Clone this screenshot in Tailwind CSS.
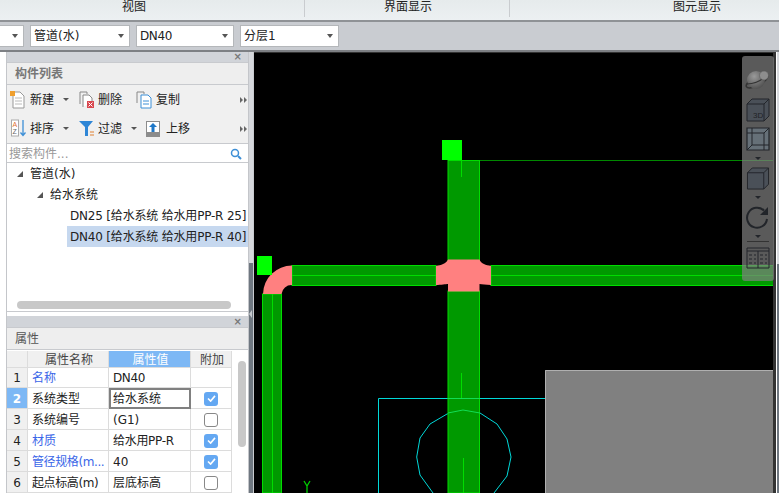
<!DOCTYPE html>
<html><head><meta charset="utf-8">
<script src="https://cdn.jsdelivr.net/npm/@tailwindcss/browser@4"></script>
</head>
<body class="w-[779px] h-[493px] overflow-hidden bg-white font-['DejaVu_Sans','Noto_Sans_CJK_SC',sans-serif] text-[12px] text-[#222]">
<div class="flex flex-col h-[493px]">
  <!-- ribbon group captions -->
  <div class="h-[22px] shrink-0 flex bg-gradient-to-b from-[#e6ebec] to-[#ecf0f2] border-b-2 border-[#8f9296] leading-[14px]">
    <div class="w-[305px] text-center border-r border-[#c9cccf] mb-[3px]"><span class="relative left-[-18px]">视图</span></div>
    <div class="w-[205px] text-center border-r border-[#c9cccf] mb-[3px] pl-[2px]">界面显示</div>
    <div class="flex-1 text-center pl-[105px]">图元显示</div>
  </div>
  <!-- combo toolbar -->
  <div class="h-[28px] shrink-0 bg-[#c9ccd1] flex items-center gap-[6px]">
    <div class="w-[25px] -ml-px h-[22px] bg-white border border-[#b4b7ba] flex items-center justify-end pr-[5px]"><i class="w-0 h-0 border-x-[3px] border-x-transparent border-t-[4px] border-t-[#555]"></i></div>
    <div class="w-[100px] h-[22px] bg-white border border-[#b4b7ba] flex items-center justify-between pl-[3px] pr-[5px]">管道(水)<i class="w-0 h-0 border-x-[3px] border-x-transparent border-t-[4px] border-t-[#555]"></i></div>
    <div class="w-[98px] h-[22px] bg-white border border-[#b4b7ba] flex items-center justify-between pl-[3px] pr-[5px]"><span class="tracking-[-0.4px]">DN40</span><i class="w-0 h-0 border-x-[3px] border-x-transparent border-t-[4px] border-t-[#555]"></i></div>
    <div class="w-[99px] h-[22px] bg-white border border-[#b4b7ba] flex items-center justify-between pl-[3px] pr-[5px]">分层1<i class="w-0 h-0 border-x-[3px] border-x-transparent border-t-[4px] border-t-[#555]"></i></div>
  </div>
  <div class="flex-1 min-h-0 flex border-t-2 border-[#7d8084]">
    <!-- left strip -->
    <div class="w-[7px] shrink-0 bg-white border-r border-[#c4c6ca]"></div>
    <!-- left panels -->
    <div class="w-[242px] shrink-0 flex flex-col bg-white border-r border-[#c4c6ca]">
      <div class="h-[10px] bg-[#d1d4d9] flex items-center justify-end pr-[6px] text-[#777] text-[10px] leading-none font-bold">×</div>
      <div class="h-[23px] bg-[#eeeeee] border-y border-[#c8cace] pl-[8px] pt-px flex items-center font-bold text-[#777]">构件列表</div>
      <div class="h-[29px] bg-[#f0f0f0] flex items-center pl-[3px] relative">
        <svg width="15" height="18" viewBox="0 0 15 18" class="mr-[5px]"><path d="M3 1h7l4 4v12H3z" fill="#fff" stroke="#999"/><path d="M5 7h7M5 10h7M5 13h7" stroke="#bbb"/><rect x="0" y="0" width="5" height="5" fill="#f0a030"/></svg>
        <span>新建</span><i class="ml-[9px] w-0 h-0 border-x-[3px] border-x-transparent border-t-[3px] border-t-[#555]"></i>
        <svg width="16" height="18" viewBox="0 0 16 18" class="ml-[10px] mr-[3px]"><path d="M1 13V1h7v2" fill="none" stroke="#888"/><path d="M4 16V4h6l3 3v4" fill="#fff" stroke="#888"/><rect x="8" y="10" width="7" height="7" fill="#d9484f"/><path d="M9.5 11.5l4 4M13.500 11.500l-4 4" stroke="#fff"/></svg>
        <span>删除</span>
        <svg width="17" height="18" viewBox="0 0 17 18" class="ml-[14px] mr-[3px]"><path d="M1 12V1h7v2" fill="none" stroke="#888"/><path d="M5 17V4h7l3 3v10z" fill="#fff" stroke="#3d8fd6"/><path d="M7 10h6M7 13h6" stroke="#3d8fd6"/></svg>
        <span>复制</span>
        <span class="absolute right-[1px] top-[12px] flex gap-px"><i class="w-0 h-0 border-y-[3px] border-y-transparent border-l-[3px] border-l-[#666]"></i><i class="w-0 h-0 border-y-[3px] border-y-transparent border-l-[3px] border-l-[#666]"></i></span>
      </div>
      <div class="h-[29px] bg-[#f0f0f0] flex items-center pl-[4px] relative">
        <svg width="15" height="19" viewBox="0 0 15 19" class="mr-[4px]"><rect x=".5" y="1" width="7" height="16" fill="#fff" stroke="#aaa"/><text x="1.500" y="8" font-size="7" fill="#e07030" font-family="Liberation Sans">A</text><text x="1.500" y="15" font-size="7" fill="#666" font-family="Liberation Sans">Z</text><path d="M12 1v15M9.500 13.500l2.500 3 2.500-3" fill="none" stroke="#3d8fd6" stroke-width="1.300"/></svg>
        <span>排序</span><i class="ml-[9px] w-0 h-0 border-x-[3px] border-x-transparent border-t-[3px] border-t-[#555]"></i>
        <svg width="16" height="17" viewBox="0 0 16 17" class="ml-[10px] mr-[3px]"><path d="M0 1h14L9 7v9H6V7z" fill="#2e86d6"/><path d="M11 12h4M11 15h4" stroke="#e08030"/></svg>
        <span>过滤</span><i class="ml-[9px] w-0 h-0 border-x-[3px] border-x-transparent border-t-[3px] border-t-[#555]"></i>
        <svg width="15" height="16" viewBox="0 0 15 16" class="ml-[9px] mr-[5px]"><rect x="0" y="0" width="14" height="16" fill="#8c8c8c"/><rect x="1" y="1" width="12" height="10" fill="#fff"/><path d="M7 2l4 4H8.500v5h-3V6H3z" fill="#1f78c8"/></svg>
        <span>上移</span>
        <span class="absolute right-[1px] top-[12px] flex gap-px"><i class="w-0 h-0 border-y-[3px] border-y-transparent border-l-[3px] border-l-[#666]"></i><i class="w-0 h-0 border-y-[3px] border-y-transparent border-l-[3px] border-l-[#666]"></i></span>
      </div>
      <div class="h-[20px] bg-white border-y border-[#c8cace] flex items-center justify-between pl-[2px] pr-[6px] pt-px text-[#999]">搜索构件...
        <svg width="12" height="12" viewBox="0 0 12 12"><circle cx="5" cy="5" r="3.500" fill="none" stroke="#3d8fd6" stroke-width="1.500"/><path d="M8 8l3 3" stroke="#3d8fd6" stroke-width="2"/></svg>
      </div>
      <div class="h-[148px] bg-white relative flex flex-col">
        <div class="h-[21px] flex items-center pl-[10px] gap-[7px]"><i class="w-0 h-0 border-b-[6px] border-b-[#555] border-l-[6px] border-l-transparent"></i>管道(水)</div>
        <div class="h-[21px] flex items-center pl-[30px] pt-px gap-[7px]"><i class="w-0 h-0 border-b-[6px] border-b-[#555] border-l-[6px] border-l-transparent"></i>给水系统</div>
        <div class="h-[21px] flex items-center pl-[63px] whitespace-nowrap tracking-[-0.19px]">DN25 [给水系统 给水用PP-R 25]</div>
        <div class="h-[21px] ml-[60px] pl-[3px] bg-[#c6d8ef] flex items-center whitespace-nowrap tracking-[-0.19px]">DN40 [给水系统 给水用PP-R 40]</div>
        <div class="absolute left-[10px] top-[138px] w-[214px] h-[8px] rounded-full bg-[#c8c8c8]"></div>
      </div>
      <div class="h-[5px] bg-white border-t border-[#c8cace]"></div>
      <div class="h-[11px] bg-[#d1d4d9] flex items-center justify-end pr-[6px] text-[#777] text-[10px] leading-none font-bold">×</div>
      <div class="h-[23px] bg-[#eeeeee] border-y border-[#c8cace] pl-[8px] pt-px flex items-center text-[#555]">属性</div>
      <div class="flex-1 min-h-0 overflow-hidden flex bg-white pt-px">
        <div class="w-[225px] shrink-0 grid grid-cols-[21px_81px_82px_41px] grid-rows-[17px_20px] auto-rows-[21px] [&>div]:border-r [&>div]:border-b [&>div]:border-[#dcdcdc] [&>div]:flex [&>div]:items-center [&>div]:whitespace-nowrap [&>div]:pt-px">
          <div class="bg-[#f0f0f0]"></div>
          <div class="bg-[#f0f0f0] justify-center pl-[2px] text-[#444]">属性名称</div>
          <div class="bg-[#7db8f5] justify-center pl-[2px] text-white">属性值</div>
          <div class="bg-[#f0f0f0] justify-center pl-[2px] text-[#444]">附加</div>

          <div class="bg-[#f0f0f0] justify-center">1</div><div class="pl-[4px] text-[#3a66e8]">名称</div><div class="pl-[4px] tracking-[-0.4px]">DN40</div><div></div>
          <div class="bg-[#7db8f5] text-white font-bold justify-center">2</div><div class="pl-[4px]">系统类型</div><div class="pl-[2px] border-2! border-[#808080]!">给水系统</div><div class="justify-center"><span class="w-[14px] h-[14px] rounded-[3px] bg-[#64a8f2] flex items-center justify-center"><svg width="9" height="7" viewBox="0 0 10 8"><path d="M1 4l3 3 5-6" fill="none" stroke="#fff" stroke-width="1.800"/></svg></span></div>
          <div class="bg-[#f0f0f0] justify-center">3</div><div class="pl-[4px]">系统编号</div><div class="pl-[4px]">(G1)</div><div class="justify-center"><span class="w-[14px] h-[14px] rounded-[3px] bg-white border border-[#888]"></span></div>
          <div class="bg-[#f0f0f0] justify-center">4</div><div class="pl-[4px] text-[#3a66e8]">材质</div><div class="pl-[4px] tracking-[-0.3px]">给水用PP-R</div><div class="justify-center"><span class="w-[14px] h-[14px] rounded-[3px] bg-[#64a8f2] flex items-center justify-center"><svg width="9" height="7" viewBox="0 0 10 8"><path d="M1 4l3 3 5-6" fill="none" stroke="#fff" stroke-width="1.800"/></svg></span></div>
          <div class="bg-[#f0f0f0] justify-center">5</div><div class="pl-[4px] text-[#3a66e8] tracking-[-0.4px]">管径规格(m...</div><div class="pl-[4px]">40</div><div class="justify-center"><span class="w-[14px] h-[14px] rounded-[3px] bg-[#64a8f2] flex items-center justify-center"><svg width="9" height="7" viewBox="0 0 10 8"><path d="M1 4l3 3 5-6" fill="none" stroke="#fff" stroke-width="1.800"/></svg></span></div>
          <div class="bg-[#f0f0f0] justify-center">6</div><div class="pl-[4px] tracking-[-0.4px]">起点标高(m)</div><div class="pl-[4px]">层底标高</div><div class="justify-center"><span class="w-[14px] h-[14px] rounded-[3px] bg-white border border-[#888]"></span></div>
        </div>
        <div class="flex-1 pl-[6px] pt-[10px] bg-white"><div class="w-[8px] h-[86px] rounded-full bg-[#c8c8c8]"></div></div>
      </div>
    </div>
    <!-- splitter -->
    <div class="w-[5px] shrink-0 bg-[#d6d8dc] relative border-r border-[#c8cace]">
      <div class="absolute left-0 right-0 top-[211px] bottom-0 bg-[#6f7780]"></div>
      <i class="absolute left-0 top-[258px] w-0 h-0 border-y-[4px] border-y-transparent border-r-[3px] border-r-[#c4c8cc]"></i>
    </div>
    <!-- canvas -->
    <div class="flex-1 relative bg-black overflow-hidden border-t border-[#333]">
      <svg class="absolute left-0 top-[-53px]" width="522" height="493" viewBox="254 0 522 493">
        <defs><radialGradient id="ball" cx="40%" cy="30%" r="75%"><stop offset="0" stop-color="#9a9a9a"/><stop offset="1" stop-color="#4d4d4d"/></radialGradient></defs>
        <!-- grey block -->
        <rect x="545" y="370" width="234" height="123" fill="#808080"/><path d="M545.500 493V370.500H779" fill="none" stroke="#b0b0b0"/>
        <!-- cyan -->
        <path d="M378.500 493V398.500H545" fill="none" stroke="#00d8d8"/>
        <path d="M433 493L420 475 416.700 457 420 438 430 424 447 414 463 410 480 413 497 424 507 439 511 457 507 476 494 493" fill="none" stroke="#00d8d8"/>
        <!-- top right line -->
        <path d="M480 160.500H779" stroke="#008800"/>
        <!-- pipes -->
        <rect x="448" y="160.500" width="31.500" height="100" fill="#009900" stroke="#00dd00"/>
        <rect x="448" y="291" width="31.500" height="202" fill="#009900" stroke="#00dd00"/>
        <path d="M461.500 160v17" stroke="#00dd00"/>
        <path d="M461.500 373v25M463.500 458v35" stroke="#00dd00"/>
        <path d="M463 410l-15 3M463 410l17 3" stroke="#11dd55"/>
        <path d="M448 398.500H480" stroke="#11dd55"/>
        <rect x="292" y="265.500" width="144" height="20" fill="#009900" stroke="#00dd00"/>
        <path d="M292 275.500H436" stroke="#00dd00"/>
        <rect x="491" y="265.500" width="290" height="20" fill="#009900" stroke="#00dd00"/>
        <path d="M491 275.500H779" stroke="#00dd00"/>
        <rect x="262.500" y="294" width="19" height="199" fill="#009900" stroke="#00dd00"/>
        <path d="M272.500 294V493" stroke="#00dd00"/>
        <!-- elbow -->
        <path d="M292 265.500A29 29 0 0 0 263 294H281.500A10 10 0 0 1 292 285Z" fill="#ff8080"/>
        <!-- tee/cross -->
        <path d="M448 259.500H479.500C481 264 486 265 491 266V285C486 285 482 284 479.500 284V291.500H448V284C446 284 441 285 436 285V266C441 265 446 264 448 259.500Z" fill="#ff8080"/>
        <!-- handles -->
        <rect x="442" y="140" width="20" height="20" fill="#00ff00"/>
        <rect x="257" y="256" width="15" height="19" fill="#00ff00"/>
        <!-- Y axis -->
        <path d="M304 481l3 5 3-5M307 486v7" fill="none" stroke="#00cc00" stroke-width="1.300"/>
      </svg>
      <!-- dark right edge -->
      <div class="absolute right-0 top-0 bottom-0 w-[3px] bg-[#333]"></div>
      <!-- floating view toolbar -->
      <div class="absolute left-[488px] top-[3px] w-[32px] h-[225px] rounded-[3px] bg-[#808080]/70 flex flex-col items-center pt-[13px]">
        <svg width="26" height="21" viewBox="0 0 26 21"><ellipse cx="12" cy="12" rx="12" ry="4.500" transform="rotate(-28 12 12)" fill="none" stroke="#333" stroke-width="1.500"/><circle cx="11" cy="11" r="9" fill="url(#ball)"/><path d="M2 15Q12 15 20 8" fill="none" stroke="#333" stroke-width="1.200"/><circle cx="19" cy="6.500" r="4.500" fill="#8d8d8d" stroke="#555" stroke-width=".5"/></svg>
        <svg class="mt-[8px]" width="24" height="24" viewBox="0 0 24 24"><path d="M1 6l5-5h17v17l-5 5H1z" fill="#4a5058" stroke="#22252a"/><path d="M1 6h17v17M18 6l5-5" fill="none" stroke="#22252a"/><text x="7" y="20" font-size="8" fill="#1f2226" font-family="Liberation Sans">3D</text></svg>
        <svg class="mt-[5px]" width="24" height="24" viewBox="0 0 24 24"><path d="M1 1h22v22H1z" fill="#667078" stroke="#22252a" stroke-width="1.200"/><path d="M1 6h17v17M18 6l5-5M6 1v17h17M6 18l-5 5" fill="none" stroke="#22252a"/></svg>
        <i class="mt-[6px] w-0 h-0 border-x-[3px] border-x-transparent border-t-[3px] border-t-[#22252a]"></i>
        <svg class="mt-[7px]" width="24" height="23" viewBox="0 0 24 24"><path d="M1 6l5-5h17v17l-5 5H1z" fill="#4a5058" stroke="#22252a"/><path d="M1 6h17v17M18 6l5-5" fill="none" stroke="#22252a"/></svg>
        <i class="mt-[6px] w-0 h-0 border-x-[3px] border-x-transparent border-t-[3px] border-t-[#22252a]"></i>
        <svg class="mt-[7px]" width="24" height="24" viewBox="0 0 24 24"><path d="M21 13A10 10 0 1 1 18 4.500" fill="none" stroke="#22252a" stroke-width="2"/><path d="M22 1v8h-8z" fill="#22252a"/></svg>
        <i class="mt-[5px] w-0 h-0 border-x-[3px] border-x-transparent border-t-[3px] border-t-[#22252a]"></i>
        <div class="mt-[3px] w-[22px] h-px bg-[#333]"></div>
        <svg class="mt-[4px]" width="24" height="23" viewBox="0 0 24 23"><path d="M1 2h22v20H1z" fill="none" stroke="#22252a"/><path d="M1 5h22M12 5v17M3 9h3M8 9h2M14 9h3M19 9h2M3 13h3M8 13h2M14 13h3M19 13h2M3 17h3M8 17h2M14 17h3M19 17h2" fill="none" stroke="#22252a"/></svg>
      </div>
    </div>
    <!-- right edge -->
    <div class="w-[3px] shrink-0 bg-[#d6d8dc] relative border-l border-white">
      <div class="absolute left-0 right-0 top-[212px] bottom-0 bg-[#6f7780]"></div>
    </div>
  </div>
</div>
</body></html>
